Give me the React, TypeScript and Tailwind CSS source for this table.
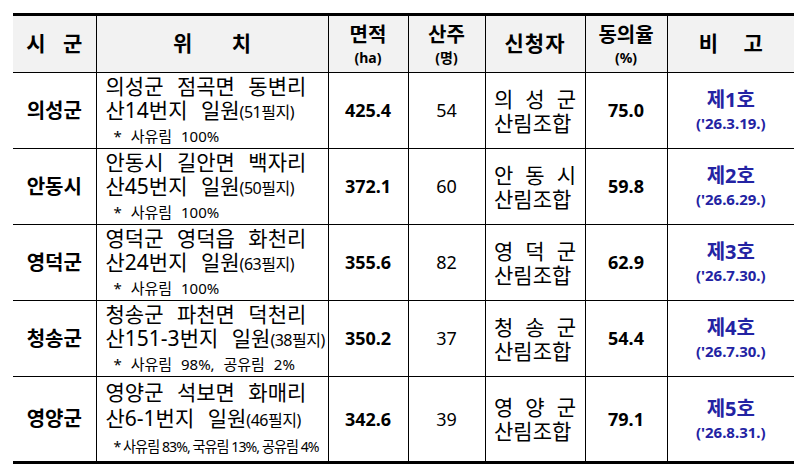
const rows = [
  {
    region: '의성군',
    line1: '의성군 점곡면 동변리',
    line2: '산14번지 일원',
    parcels: '(51필지)',
    note: '* 사유림 100%',
    tight: false,
    area: '425.4',
    owners: '54',
    applicant: ['의', '성', '군'],
    rate: '75.0',
    no: '제1호',
    date: "('26.3.19.)",
  },
  {
    region: '안동시',
    line1: '안동시 길안면 백자리',
    line2: '산45번지 일원',
    parcels: '(50필지)',
    note: '* 사유림 100%',
    tight: false,
    area: '372.1',
    owners: '60',
    applicant: ['안', '동', '시'],
    rate: '59.8',
    no: '제2호',
    date: "('26.6.29.)",
  },
  {
    region: '영덕군',
    line1: '영덕군 영덕읍 화천리',
    line2: '산24번지 일원',
    parcels: '(63필지)',
    note: '* 사유림 100%',
    tight: false,
    area: '355.6',
    owners: '82',
    applicant: ['영', '덕', '군'],
    rate: '62.9',
    no: '제3호',
    date: "('26.7.30.)",
  },
  {
    region: '청송군',
    line1: '청송군 파천면 덕천리',
    line2: '산151-3번지 일원',
    parcels: '(38필지)',
    note: '* 사유림 98%, 공유림 2%',
    tight: false,
    area: '350.2',
    owners: '37',
    applicant: ['청', '송', '군'],
    rate: '54.4',
    no: '제4호',
    date: "('26.7.30.)",
  },
  {
    region: '영양군',
    line1: '영양군 석보면 화매리',
    line2: '산6-1번지 일원',
    parcels: '(46필지)',
    note: '* 사유림 83%, 국유림 13%, 공유림 4%',
    tight: true,
    area: '342.6',
    owners: '39',
    applicant: ['영', '양', '군'],
    rate: '79.1',
    no: '제5호',
    date: "('26.8.31.)",
  },
];

const font = "font-['Noto_Sans','Noto_Sans_CJK_KR',sans-serif]";

export default function App() {
  return (
    <div className={`w-[807px] h-[474px] bg-white pl-[13px] pt-[13px] text-black ${font}`}>
      <table className="w-[781px] table-fixed border-collapse">
        <colgroup>
          <col className="w-[83px]" />
          <col className="w-[232px]" />
          <col className="w-[80px]" />
          <col className="w-[77px]" />
          <col className="w-[100px]" />
          <col className="w-[82px]" />
          <col className="w-[127px]" />
        </colgroup>
        <thead>
          <tr className="h-[58px] bg-[#f2f2f2] border-t-[3px] border-b border-black">
            <th className="border-r border-black text-[21px] font-bold tracking-[6px] pl-[6px]">시 군</th>
            <th className="border-r border-black text-[21px] font-bold [word-spacing:34px]">위 치</th>
            <th className="border-r border-black font-bold">
              <div className="text-[20px] leading-[27px]">면적</div>
              <div className="text-[14px] leading-[20px]">(ha)</div>
            </th>
            <th className="border-r border-black font-bold">
              <div className="text-[20px] leading-[27px]">산주</div>
              <div className="text-[14px] leading-[20px]">(명)</div>
            </th>
            <th className="border-r border-black text-[21px] font-bold tracking-[1px]">신청자</th>
            <th className="border-r border-black font-bold">
              <div className="text-[20px] leading-[27px]">동의율</div>
              <div className="text-[14px] leading-[20px]">(%)</div>
            </th>
            <th className="text-[21px] font-bold tracking-[10px] pl-[10px]">비 고</th>
          </tr>
        </thead>
        <tbody>
          {rows.map((r, i) => (
            <tr
              key={r.region}
              className={`${i === rows.length - 1 ? 'h-[86px] border-b-[3px]' : 'h-[76px] border-b'} border-black`}
            >
              <td className="border-r border-black text-center text-[20px] font-bold">{r.region}</td>
              <td className={`border-r border-black pl-[9px] align-middle ${r.tight ? 'space-y-[2px]' : ''}`}>
                <div className="text-[21px] leading-[24px] [word-spacing:8px] whitespace-nowrap">{r.line1}</div>
                <div className="text-[21px] leading-[24px] [word-spacing:8px] whitespace-nowrap">
                  {r.line2}
                  <span className="text-[16px] [word-spacing:0px] tracking-[-0.5px]">{r.parcels}</span>
                </div>
                {r.tight ? (
                  <div className="text-[15px] leading-[24px] pl-[8px] whitespace-nowrap tracking-[-1px] origin-left scale-x-[0.94]">
                    {r.note}
                  </div>
                ) : (
                  <div className="text-[15px] leading-[24px] pl-[8px] whitespace-nowrap [word-spacing:5px]">{r.note}</div>
                )}
              </td>
              <td className="border-r border-black text-center text-[18px] font-bold">{r.area}</td>
              <td className="border-r border-black text-center text-[18px]">{r.owners}</td>
              <td className="border-r border-black">
                <div className="mx-auto w-[82px] text-[21px] leading-[24px]">
                  <div className="flex justify-between">
                    {r.applicant.map((c) => (
                      <span key={c}>{c}</span>
                    ))}
                  </div>
                  <div>산림조합</div>
                </div>
              </td>
              <td className="border-r border-black text-center text-[18px] font-bold">{r.rate}</td>
              <td className="text-center font-bold text-[#2323a3]">
                <div className="text-[20px] leading-[26px]">{r.no}</div>
                <div className="text-[15px] leading-[21px]">{r.date}</div>
              </td>
            </tr>
          ))}
        </tbody>
      </table>
    </div>
  );
}
